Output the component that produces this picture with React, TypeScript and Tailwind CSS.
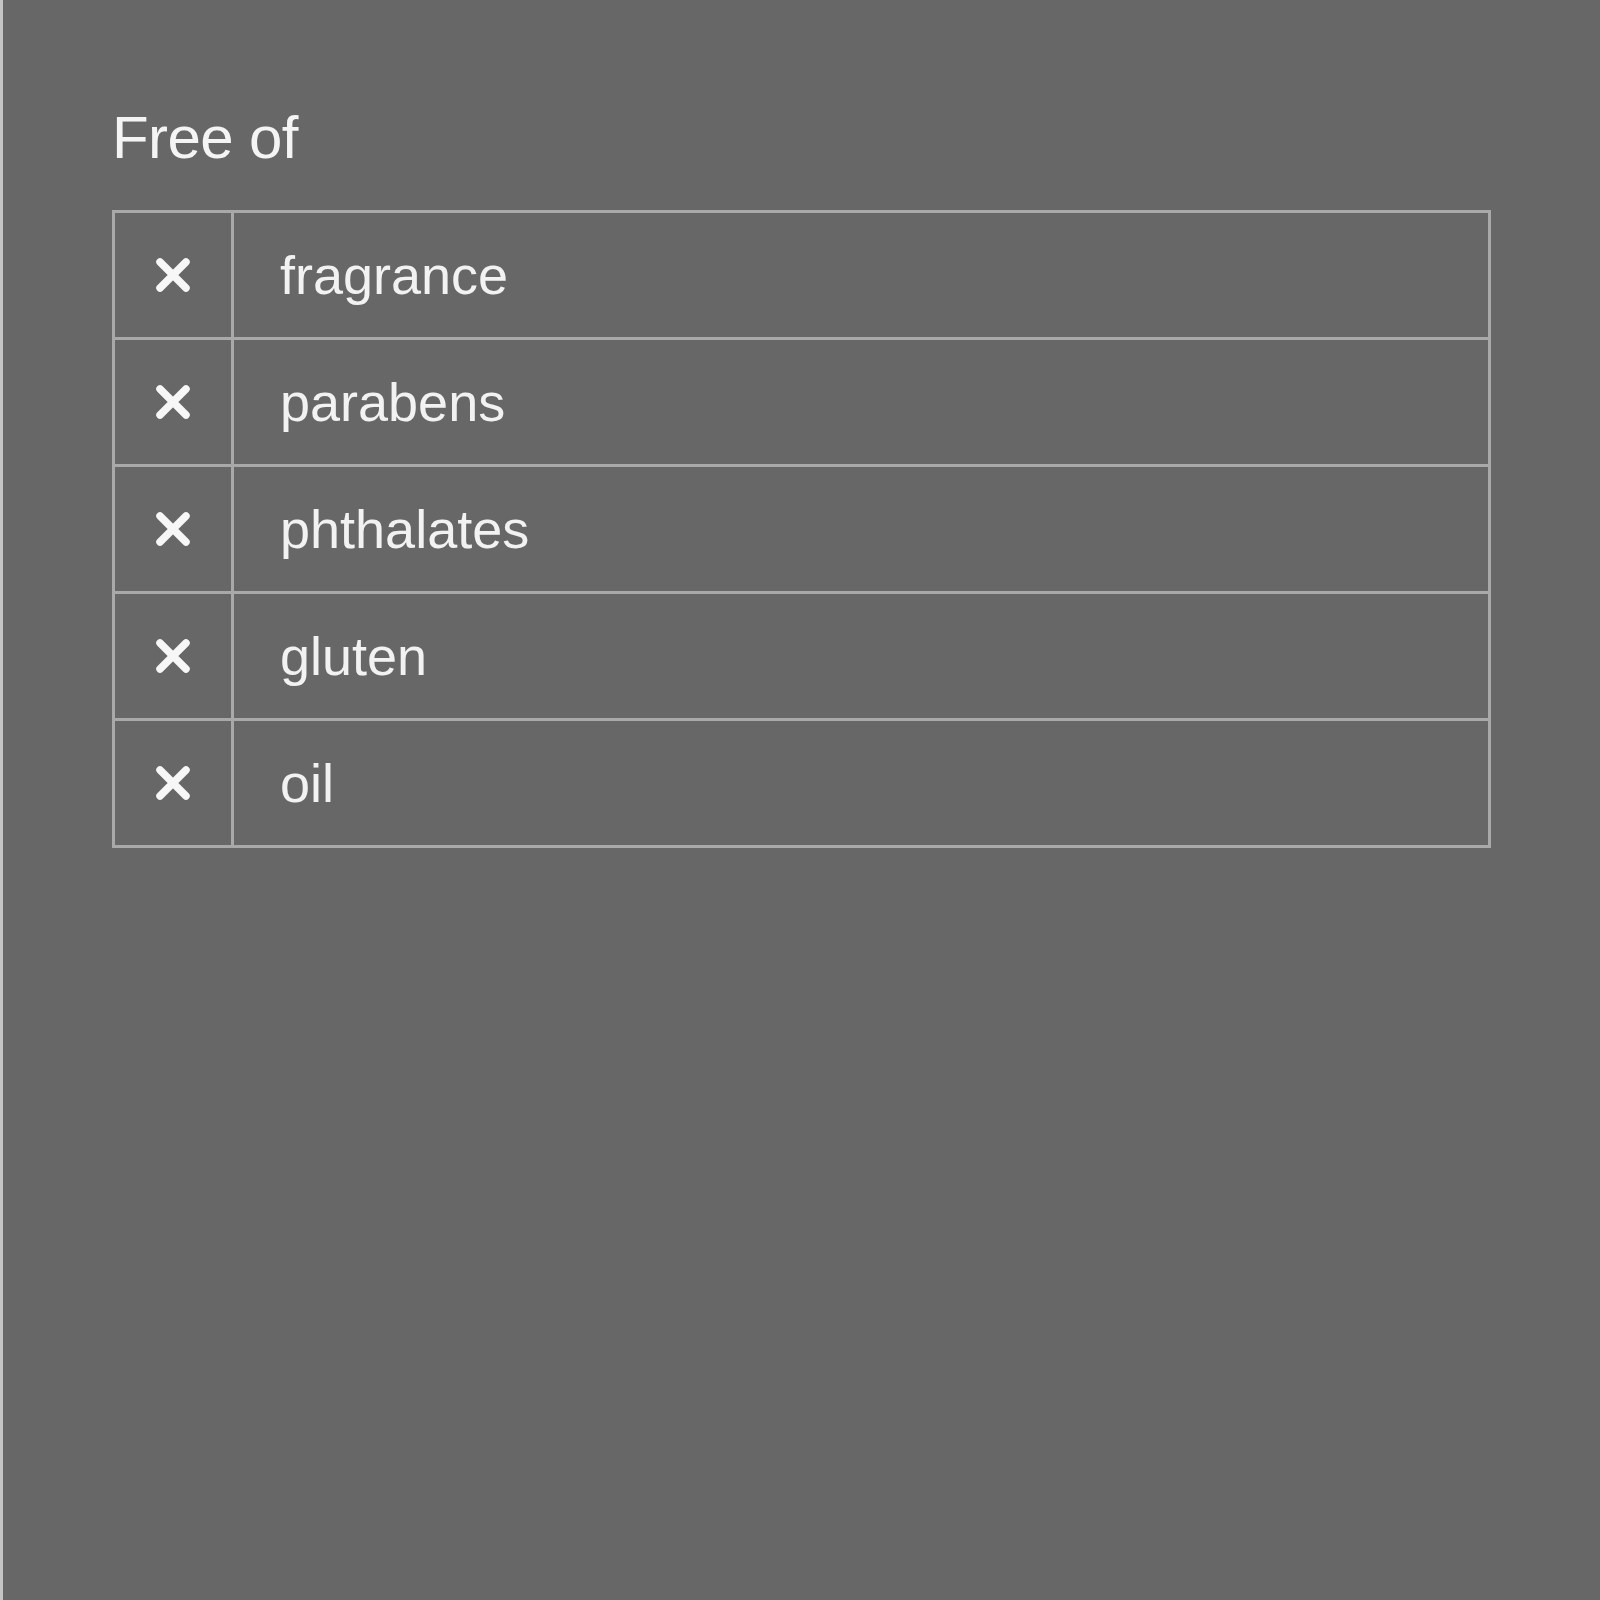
const items = ["fragrance", "parabens", "phthalates", "gluten", "oil"];

const Cross = () => (
  <svg width="38" height="38" viewBox="0 0 38 38" fill="none">
    <path
      d="M6 6 L32 32 M32 6 L6 32"
      stroke="#f7f7f7"
      strokeWidth="7.5"
      strokeLinecap="round"
    />
  </svg>
);

const App = () => {
  return (
    <div
      className="min-h-screen bg-[#676767] border-l-[3px] border-[#c4c4c4] pl-[109px] pt-[108px]"
      style={{ fontFamily: '"Liberation Sans", Arial, sans-serif' }}
    >
      <h1 className="text-[60px] leading-[60px] tracking-[-0.01em] text-[#f4f4f4] mb-[42px]">
        Free of
      </h1>

      {/* Ingredients table */}
      <div className="w-[1379px] border-[3px] border-[#a9a9a9]">
        {items.map((item, index) => (
          <div
            key={item}
            className={`flex ${
              index < items.length - 1
                ? "h-[127px] border-b-[3px] border-[#a9a9a9]"
                : "h-[124px]"
            }`}
          >
            <div className="w-[119px] border-r-[3px] border-[#a9a9a9] flex items-center justify-center">
              <Cross />
            </div>
            <div className="flex-1 flex items-center pl-[46px] text-[54px] text-[#f2f2f2]">
              {item}
            </div>
          </div>
        ))}
      </div>
    </div>
  );
};

export default App;
